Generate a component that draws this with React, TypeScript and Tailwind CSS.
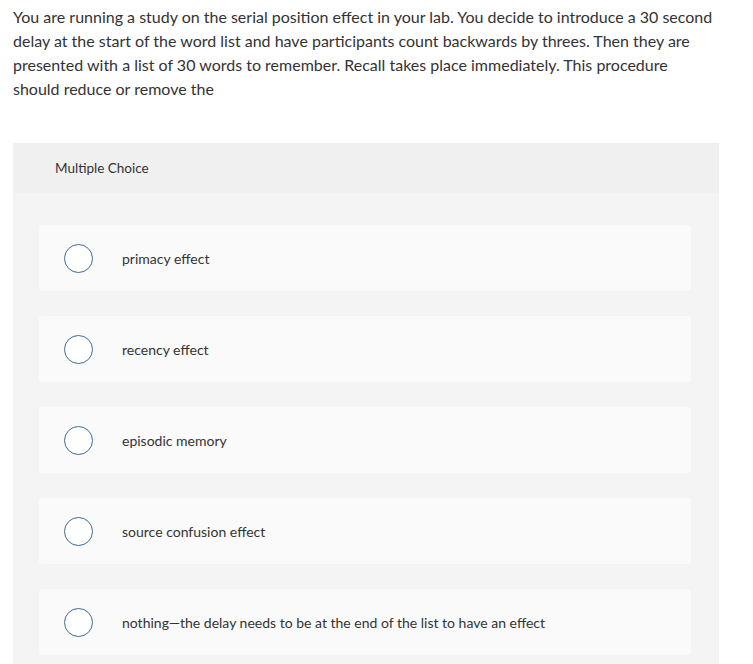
import React from 'react';

const options = [
  'primacy effect',
  'recency effect',
  'episodic memory',
  'source confusion effect',
  'nothing\u2014the delay needs to be at the end of the list to have an effect',
];

const App: React.FC = () => {
  return (
    <div className="w-[753px] min-h-[664px] bg-white text-[#333] font-['Lato','Liberation_Sans',sans-serif]">
      <div className="px-[13px] pt-[5px]">
        <p className="text-[16px] leading-6">
          You are running a study on the serial position effect in your lab. You decide to introduce a 30 second
          <br />
          delay at the start of the word list and have participants count backwards by threes. Then they are
          <br />
          presented with a list of 30 words to remember. Recall takes place immediately. This procedure
          <br />
          should reduce or remove the
        </p>
      </div>

      {/* Question panel */}
      <div className="mx-[13px] mt-[42px] w-[706px]">
        <div className="h-[50px] bg-[#f0f0f0] flex items-center pl-[42px] text-[13.5px]">
          Multiple Choice
        </div>
        <div className="bg-[#f4f4f4] pt-8 pl-[26px] pr-[28px] pb-[10px] flex flex-col gap-[25px]">
          {options.map((opt, i) => (
            <div key={i} className="h-[66px] bg-[#fafafa] rounded-[3px] flex items-center">
              <span className="ml-[25px] w-[29px] h-[29px] rounded-full border-[1.5px] border-[#3d6a99] bg-white shrink-0" />
              <span className="ml-[29px] text-[14px]">{opt}</span>
            </div>
          ))}
        </div>
      </div>
    </div>
  );
};

export default App;
